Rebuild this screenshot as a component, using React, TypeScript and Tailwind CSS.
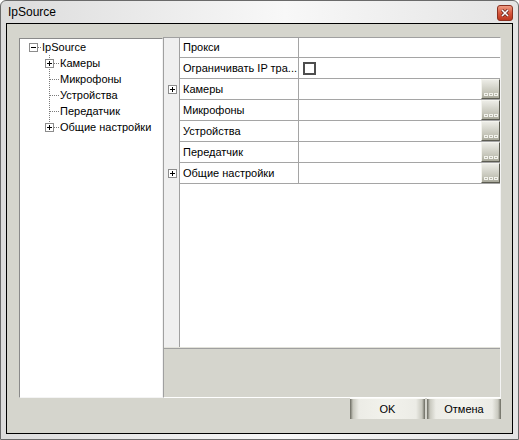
import React from 'react'

const font = "font-['Liberation_Sans',Arial,sans-serif]"

function Box({ open }: { open: boolean }) {
  return (
    <>
      <rect x="0.5" y="4.5" width="8" height="8" fill="#fff" stroke="#8c8c8c" />
      <line x1="2" y1="8.5" x2="7" y2="8.5" stroke="#000" />
      {!open && <line x1="4.5" y1="6" x2="4.5" y2="11" stroke="#000" />}
    </>
  )
}

function PlusBox() {
  return (
    <svg width="9" height="9" viewBox="0 4 9 9" className="block">
      <Box open={false} />
    </svg>
  )
}

function Connector({ box, last }: { box?: boolean; last?: boolean }) {
  return (
    <svg width="14" height="16" className="block shrink-0">
      <line x1="4.5" y1="0" x2="4.5" y2={last ? 8 : 16} stroke="#7a7a7a" strokeDasharray="1 1" />
      <line x1={box ? 9 : 5} y1="8.5" x2="14" y2="8.5" stroke="#7a7a7a" strokeDasharray="1 1" />
      {box && <Box open={false} />}
    </svg>
  )
}

const children = [
  { label: 'Камеры', box: true },
  { label: 'Микрофоны' },
  { label: 'Устройства' },
  { label: 'Передатчик' },
  { label: 'Общие настройки', box: true },
]

function Tree() {
  return (
    <div className="w-[144px] h-[360px] mt-[1px] bg-white border-l border-t border-[#8a8a8a] border-r-[#f2f2f2] border-b-[#f4f4f4] border-r border-b text-[11px] text-black">
      <div className="flex items-center h-[16px]">
        <div className="w-[9px] shrink-0" />
        <svg width="13" height="16" className="block shrink-0">
          <Box open />
          <line x1="9" y1="8.5" x2="13" y2="8.5" stroke="#7a7a7a" strokeDasharray="1 1" />
        </svg>
        <span className="leading-[16px]">IpSource</span>
      </div>
      {children.map((c, i) => (
        <div key={c.label} className="flex items-center h-[16px]">
          <div className="w-[25px] shrink-0" />
          <Connector box={c.box} last={i === children.length - 1} />
          <span className="pl-[1px] leading-[16px] whitespace-nowrap">{c.label}</span>
        </div>
      ))}
    </div>
  )
}

function Ellipsis() {
  return (
    <div className="w-[19px] shrink-0 self-stretch flex items-end justify-center gap-[1px] pb-[2px] border border-t-[#f4f4ee] border-l-[#f4f4ee] border-r-[#5c5c52] border-b-[#5c5c52] bg-[linear-gradient(to_bottom,#ecece6,#c4c4b8_70%,#a8a89a)]">
      <div className="w-[4px] h-[3px] border border-[#f2f2ec] bg-[#b4b4a8]" />
      <div className="w-[4px] h-[3px] border border-[#f2f2ec] bg-[#b4b4a8]" />
      <div className="w-[4px] h-[3px] border border-[#f2f2ec] bg-[#b4b4a8]" />
    </div>
  )
}

type Row = { name: string; expand?: boolean; check?: boolean; more?: boolean }

const rows: Row[] = [
  { name: 'Прокси' },
  { name: 'Ограничивать IP тра...', check: true },
  { name: 'Камеры', expand: true, more: true },
  { name: 'Микрофоны', more: true },
  { name: 'Устройства', more: true },
  { name: 'Передатчик', more: true },
  { name: 'Общие настройки', expand: true, more: true },
]

function PropertyGrid() {
  return (
    <div className="w-[338px] h-[361px] flex flex-col border-l border-t border-[#a0a0a0] border-r border-r-[#f4f4f4] border-b border-b-white text-[11px] text-black">
      <div className="h-[310px] flex border-b border-[#e2e2da]">
        <div className="w-[16px] shrink-0 bg-[#efefef] border-r border-[#a0a0a0]">
          {rows.map((r, i) => (
            <div key={r.name} className={`${i === 0 ? 'h-[20px]' : 'h-[21px]'} flex items-center pl-[4px]`}>
              {r.expand && <PlusBox />}
            </div>
          ))}
        </div>
        <div className="flex-1 bg-white">
          {rows.map((r, i) => (
            <div key={r.name} className={`${i === 0 ? 'h-[20px]' : 'h-[21px]'} flex border-b border-[#a5a5a5]`}>
              <div className="w-[119px] shrink-0 border-r border-[#a5a5a5] pl-[3px] flex items-center whitespace-nowrap overflow-hidden">
                {r.name}
              </div>
              <div className="flex-1 flex items-center justify-between">
                {r.check ? (
                  <div className="ml-[4px] w-[13px] h-[13px] border-2 border-[#4e4e4e] bg-white" />
                ) : (
                  <span />
                )}
                {r.more && <Ellipsis />}
              </div>
            </div>
          ))}
        </div>
      </div>
      <div className="flex-1 bg-[#d5d5cd] border-t border-[#a0a0a0]" />
    </div>
  )
}

function Button({ label, w }: { label: string; w: string }) {
  return (
    <div
      className={`${w} h-[21px] flex items-center justify-center text-[11px] text-black border-t border-[#fafaf6] bg-[linear-gradient(to_right,#6a6a60_0%,#c8c8be_4%,#ecece6_12%,#f2f2ec_50%,#ecece6_88%,#c8c8be_96%,#6a6a60_100%)]`}
    >
      {label}
    </div>
  )
}

export default function App() {
  return (
    <div className={`w-[519px] h-[440px] flex flex-col border border-[#6a6a6a] rounded-t-[6px] bg-[linear-gradient(to_right,#dcdcdc,#f8f8f8_55%,#e4e4e4)] ${font}`}>
      <div className="h-[22px] flex items-start justify-between pl-[7px] pr-[5px]">
        <span className="text-[12px] leading-[22px] text-black">IpSource</span>
        <svg width="16" height="16" viewBox="0 0 16 16" className="mt-[4px] block">
          <defs>
            <linearGradient id="closeGrad" x1="0" y1="0" x2="0" y2="1">
              <stop offset="0" stopColor="#f0a088" />
              <stop offset="0.5" stopColor="#d8583e" />
              <stop offset="1" stopColor="#b8341c" />
            </linearGradient>
          </defs>
          <rect x="0.5" y="0.5" width="15" height="15" rx="2.5" fill="url(#closeGrad)" stroke="#8a3020" />
          <path d="M5 5L11 11M11 5L5 11" stroke="#5a2018" strokeWidth="3" />
          <path d="M5 5L11 11M11 5L5 11" stroke="#fff" strokeWidth="1.6" />
        </svg>
      </div>
      <div className="mx-[5px] h-[411px] border border-black bg-[#d5d5cd] pt-[13px] pl-[12px]">
        <div className="flex items-start">
          <Tree />
          <PropertyGrid />
        </div>
        <div className="w-[482px] flex justify-end gap-[2px]">
          <Button label="OK" w="w-[75px]" />
          <Button label="Отмена" w="w-[74px]" />
        </div>
      </div>
    </div>
  )
}
